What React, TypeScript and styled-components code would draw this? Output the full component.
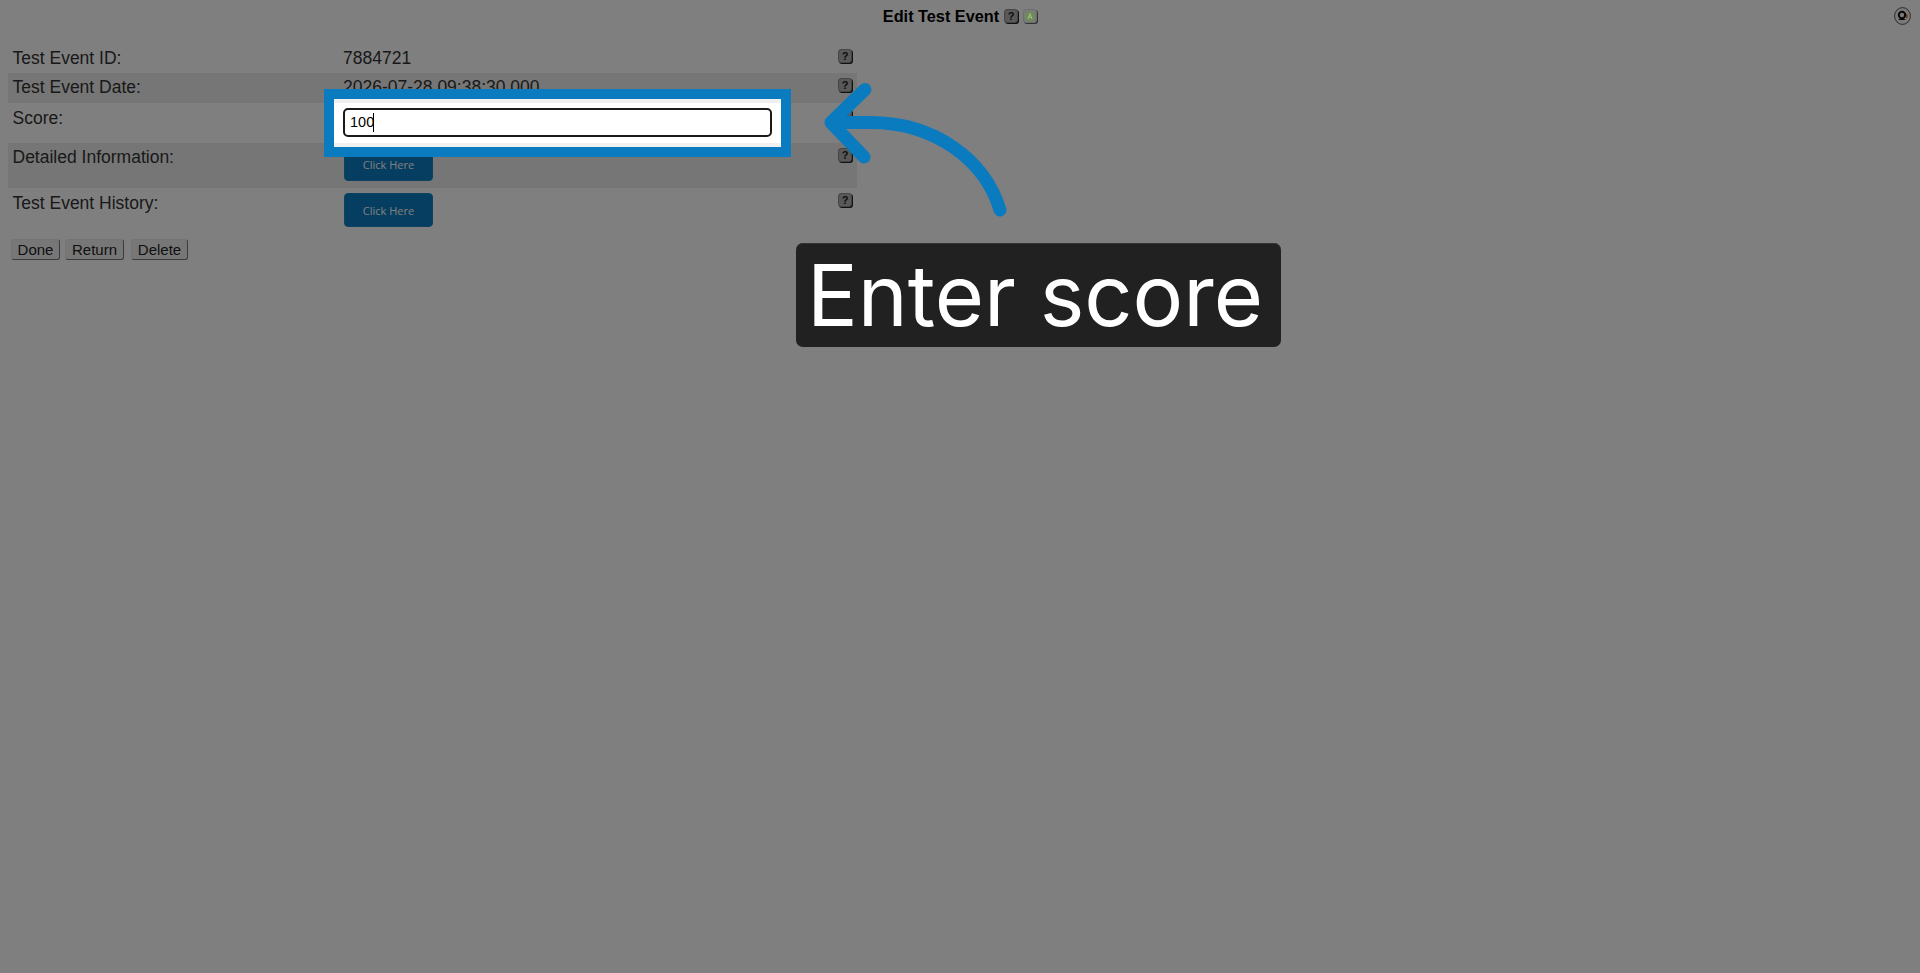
import React from "react";
import styled, { createGlobalStyle } from "styled-components";

const Global = createGlobalStyle`
  html, body { margin: 0; padding: 0; background: #fff; overflow: hidden; }
  body { font-family: "Liberation Sans", Arial, sans-serif; color: #333; }
`;

const Page = styled.div`
  position: relative;
  width: 1920px;
  height: 973px;
  overflow: hidden;
  background: #fff;
`;

const Header = styled.header`
  display: grid;
  grid-template-columns: 1fr auto 1fr;
  align-items: center;
  height: 32px;
  margin-bottom: 12px;
  box-sizing: border-box;
`;

const TitleGroup = styled.div`
  grid-column: 2;
  display: flex;
  align-items: center;
  gap: 5px;
`;

const Title = styled.h1`
  margin: 0;
  font-size: 16.3px;
  line-height: 20px;
  font-weight: 700;
  color: #000;
`;

const Corner = styled.div`
  grid-column: 3;
  display: flex;
  justify-content: flex-end;
  padding-right: 9px;
`;

const HelpKey = styled.span<{ $drop?: number }>`
  display: inline-flex;
  align-items: center;
  justify-content: center;
  width: 14px;
  height: 14px;
  box-sizing: border-box;
  margin-top: ${(p) => p.$drop ?? 0}px;
  border-radius: 3px;
  background: #b2b2b2;
  border: 1px solid #8a8a8a;
  box-shadow: 1px 1px 0 #222;
  font-size: 11px;
  font-weight: 700;
  line-height: 1;
  color: #1a1a1a;
  flex: none;
`;

const GreenKey = styled(HelpKey)`
  position: relative;
  z-index: 2;
  background: #7a7a7a;
  border-color: #6e6e6e;
  box-shadow: 1px 1px 0 #333;
`;

const Form = styled.section`
  width: 849px;
  margin-left: 8px;
`;

const Row = styled.div<{ $shaded?: boolean; $height: number; $pad: number }>`
  display: flex;
  align-items: flex-start;
  height: ${(p) => p.$height}px;
  box-sizing: border-box;
  padding: ${(p) => p.$pad}px 5px 0 4.5px;
  background: ${(p) => (p.$shaded ? "#ececec" : "transparent")};
`;

const Label = styled.div`
  width: 330.5px;
  flex: none;
  font-size: 17.5px;
  line-height: 20px;
  color: #333;
`;

const Value = styled.div`
  flex: 1;
  min-width: 0;
  font-size: 17.5px;
  line-height: 20px;
  color: #333;
`;

const ScoreInput = styled.input`
  position: relative;
  z-index: 3;
  display: block;
  width: 429px;
  height: 29px;
  box-sizing: border-box;
  padding: 0 5px 1px;
  margin: 0;
  border: 2px solid #1a1a1a;
  border-radius: 5px;
  outline: none;
  background: #fff;
  font-family: "Liberation Sans", Arial, sans-serif;
  font-size: 14.5px;
  color: #000;
`;

const Caret = styled.span`
  position: absolute;
  z-index: 4;
  left: 373px;
  top: 113px;
  width: 1px;
  height: 19px;
  background: #000;
`;

const LinkButton = styled.button`
  display: block;
  width: 89px;
  height: 34px;
  padding: 0;
  margin-left: 1px;
  border: 1px solid #1887c6;
  border-radius: 4px;
  background: #0a7cc0;
  color: #fff;
  font-family: "Open Sans", sans-serif;
  font-size: 11px;
`;

const Actions = styled.div`
  display: flex;
  gap: 5px;
  margin: 7px 0 0 11px;
`;

const ActionButton = styled.button<{ $width: number }>`
  width: ${(p) => p.$width}px;
  height: 21px;
  padding: 0;
  box-sizing: border-box;
  border: 1px solid #e8e8e8;
  border-right-color: #777;
  border-bottom-color: #777;
  border-radius: 3px;
  background: #efefef;
  color: #222;
  font-family: "Liberation Sans", Arial, sans-serif;
  font-size: 15px;
  line-height: 17px;
`;

const DeleteButton = styled(ActionButton)`
  margin-left: 2px;
`;

const Dim = styled.div`
  position: absolute;
  inset: 0;
  z-index: 1;
  background: rgba(0, 0, 0, 0.5);
`;

const Spotlight = styled.div`
  position: absolute;
  z-index: 2;
  left: 324px;
  top: 89px;
  width: 467px;
  height: 68px;
  box-sizing: border-box;
  border: 10px solid #0a7bbf;
  background: #fff;
  display: flex;
  flex-direction: column;
  justify-content: space-between;
`;

const Strip = styled.div`
  height: 4px;
  background: #f0f0f0;
`;

const Arrow = styled.svg`
  position: absolute;
  z-index: 3;
  left: 0;
  top: 0;
  pointer-events: none;
`;

const Tip = styled.div`
  position: absolute;
  z-index: 3;
  left: 796px;
  top: 243px;
  width: 485px;
  height: 104px;
  padding-left: 11px;
  box-sizing: border-box;
  border-radius: 7px;
  background: #212121;
  box-shadow: inset 0 1px 0 #333;
  color: #fff;
  font-family: Inter, sans-serif;
  font-size: 84.6px;
  line-height: 104px;
  white-space: nowrap;
`;

const rows = [
  { label: "Test Event ID:", height: 29, pad: 4, drop: 1, value: "7884721" },
  { label: "Test Event Date:", height: 30, pad: 4, drop: 1, shaded: true, value: "2026-07-28 09:38:30.000" },
  { label: "Score:", height: 40, pad: 5, drop: 1, score: true },
  { label: "Detailed Information:", height: 45, pad: 4, drop: 1, shaded: true, link: true },
  { label: "Test Event History:", height: 44, pad: 5, drop: 0, link: true },
];

export default function App() {
  return (
    <Page>
      <Global />
      <Header>
        <TitleGroup>
          <Title>Edit Test Event</Title>
          <HelpKey>?</HelpKey>
          <GreenKey>
            <svg width="10" height="11" viewBox="0 0 10 11">
              <circle cx="5" cy="5.5" r="5" fill="#6d8c56" />
              <path d="M3 8 L5 2.5 L7 8 M3.8 6 H6.2" fill="none" stroke="#a3bb92" strokeWidth="1" />
            </svg>
          </GreenKey>
        </TitleGroup>
        <Corner>
          <svg width="17" height="18" viewBox="0 0 17 18">
            <ellipse cx="8.5" cy="9" rx="7.9" ry="8.4" fill="#f4f4f4" stroke="#555" strokeWidth="1" />
            <circle cx="8" cy="8" r="3.2" fill="none" stroke="#111" strokeWidth="2" />
            <path d="M4 13 Q8 9.5 12 13 Z" fill="#111" />
            <path d="M12.5 7 A4 4 0 0 1 12.5 11" fill="none" stroke="#c8641e" strokeWidth="1.4" />
          </svg>
        </Corner>
      </Header>
      <Form>
        {rows.map((r) => (
          <Row key={r.label} $shaded={r.shaded} $height={r.height} $pad={r.pad}>
            <Label>{r.label}</Label>
            <Value>
              {r.value}
              {r.score && <ScoreInput defaultValue="100" readOnly />}
              {r.link && <LinkButton>Click Here</LinkButton>}
            </Value>
            <HelpKey $drop={r.drop}>?</HelpKey>
          </Row>
        ))}
      </Form>
      <Actions>
        <ActionButton $width={49}>Done</ActionButton>
        <ActionButton $width={59}>Return</ActionButton>
        <DeleteButton $width={57}>Delete</DeleteButton>
      </Actions>
      <Dim />
      <Spotlight>
        <Strip />
        <Strip />
      </Spotlight>
      <Caret />
      <Arrow width="1920" height="973" viewBox="0 0 1920 973" fill="none">
        <path
          d="M1000 210 C985 160 935 122.5 870 122.5 L831 122.5 M865 89.5 L831 122.5 L864 157"
          stroke="#0a7bbf"
          strokeWidth="13"
          strokeLinecap="round"
          strokeLinejoin="round"
        />
      </Arrow>
      <Tip>Enter score</Tip>
    </Page>
  );
}
